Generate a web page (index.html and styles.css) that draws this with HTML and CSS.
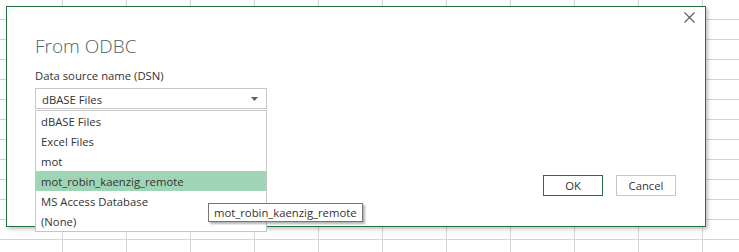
FILE: index.html
```html
<!DOCTYPE html>
<html lang="en">

<head>
    <meta charset="UTF-8">
    <meta name="viewport" content="width=device-width, initial-scale=1.0">
    <title>From ODBC</title>
    <link rel="stylesheet" href="styles.css">
</head>

<body>

    <div class="dialog">
        <svg class="close" width="11" height="11" viewBox="0 0 11 11">
            <path d="M0.5 0.5 L10.5 10.5 M10.5 0.5 L0.5 10.5" stroke="#606060" stroke-width="1.2" fill="none"/>
        </svg>

        <h2 class="title">From ODBC</h2>

        <label class="label">Data source name (DSN)</label>
        <div class="select">
            <span>dBASE Files</span>
            <svg class="arrow" width="7" height="4" viewBox="0 0 7 4">
                <path d="M0 0 H7 L3.5 4 Z" fill="#606060"/>
            </svg>
        </div>

        <ul class="options">
            <li>dBASE Files</li>
            <li>Excel Files</li>
            <li>mot</li>
            <li class="active">mot_robin_kaenzig_remote</li>
            <li>MS Access Database</li>
            <li>(None)</li>
        </ul>

        <div class="tooltip">mot_robin_kaenzig_remote</div>

        <div class="footer">
            <button type="button" class="button primary">OK</button>
            <button type="button" class="button">Cancel</button>
        </div>
    </div>

</body>

</html>
```

FILE: styles.css
```css
body {
    font-family: "Open Sans", "Noto Sans", sans-serif;
    font-size: 11.3px;
    color: #333;
    margin: 0;
    padding: 6px;
    height: 252px;
    box-sizing: border-box;
    overflow: hidden;
    background-color: #fff;
    background-image:
        linear-gradient(to right, #d4d4d4 1px, transparent 1px),
        linear-gradient(to bottom, #d4d4d4 1px, transparent 1px);
    background-size: 64px 20px;
    background-position: 62px 19px;
}

.dialog {
    position: relative;
    width: 700px;
    height: 221px;
    box-sizing: border-box;
    padding: 0 28px;
    display: flex;
    flex-direction: column;
    align-items: flex-start;
    background-color: #fff;
    border: 1px solid #217346;
    box-shadow: 2px 2px 4px rgba(0, 0, 0, 0.25);
}

.close {
    position: absolute;
    top: 5px;
    right: 10px;
}

.title {
    font-size: 19px;
    font-weight: 300;
    color: #4f6464;
    margin: 26px 0 0;
    line-height: 27px;
}

.label {
    display: block;
    margin-top: 8px;
    line-height: 16px;
}

.select {
    width: 232px;
    height: 21px;
    box-sizing: border-box;
    margin-top: 4px;
    padding: 1px 8px 0 6px;
    border: 1px solid #c6c6c6;
    display: flex;
    align-items: center;
    justify-content: space-between;
}

.options {
    position: absolute;
    top: 103px;
    left: 28px;
    width: 232px;
    box-sizing: border-box;
    margin: 0;
    padding: 0;
    list-style: none;
    background-color: #fff;
    border: 1px solid #c6c6c6;
    z-index: 1;
}

.options li {
    height: 20px;
    line-height: 21px;
    padding-left: 5px;
}

.options .active {
    background-color: #9fd5b7;
}

.tooltip {
    position: absolute;
    top: 196px;
    left: 201px;
    height: 19px;
    line-height: 18px;
    box-sizing: border-box;
    padding: 0 5px;
    background-color: #fff;
    border: 1px solid #767676;
    box-shadow: 2px 2px 2px rgba(0, 0, 0, 0.3);
    z-index: 2;
}

.footer {
    margin-top: auto;
    align-self: stretch;
    display: flex;
    justify-content: flex-end;
    gap: 13px;
    padding: 0 1px 30px 0;
}

.button {
    width: 60px;
    height: 21px;
    padding: 0;
    font-family: inherit;
    font-size: 11.3px;
    color: #333;
    background-color: #fff;
    border: 1px solid #c6c6c6;
}

.button.primary {
    border-color: #217346;
}
```
